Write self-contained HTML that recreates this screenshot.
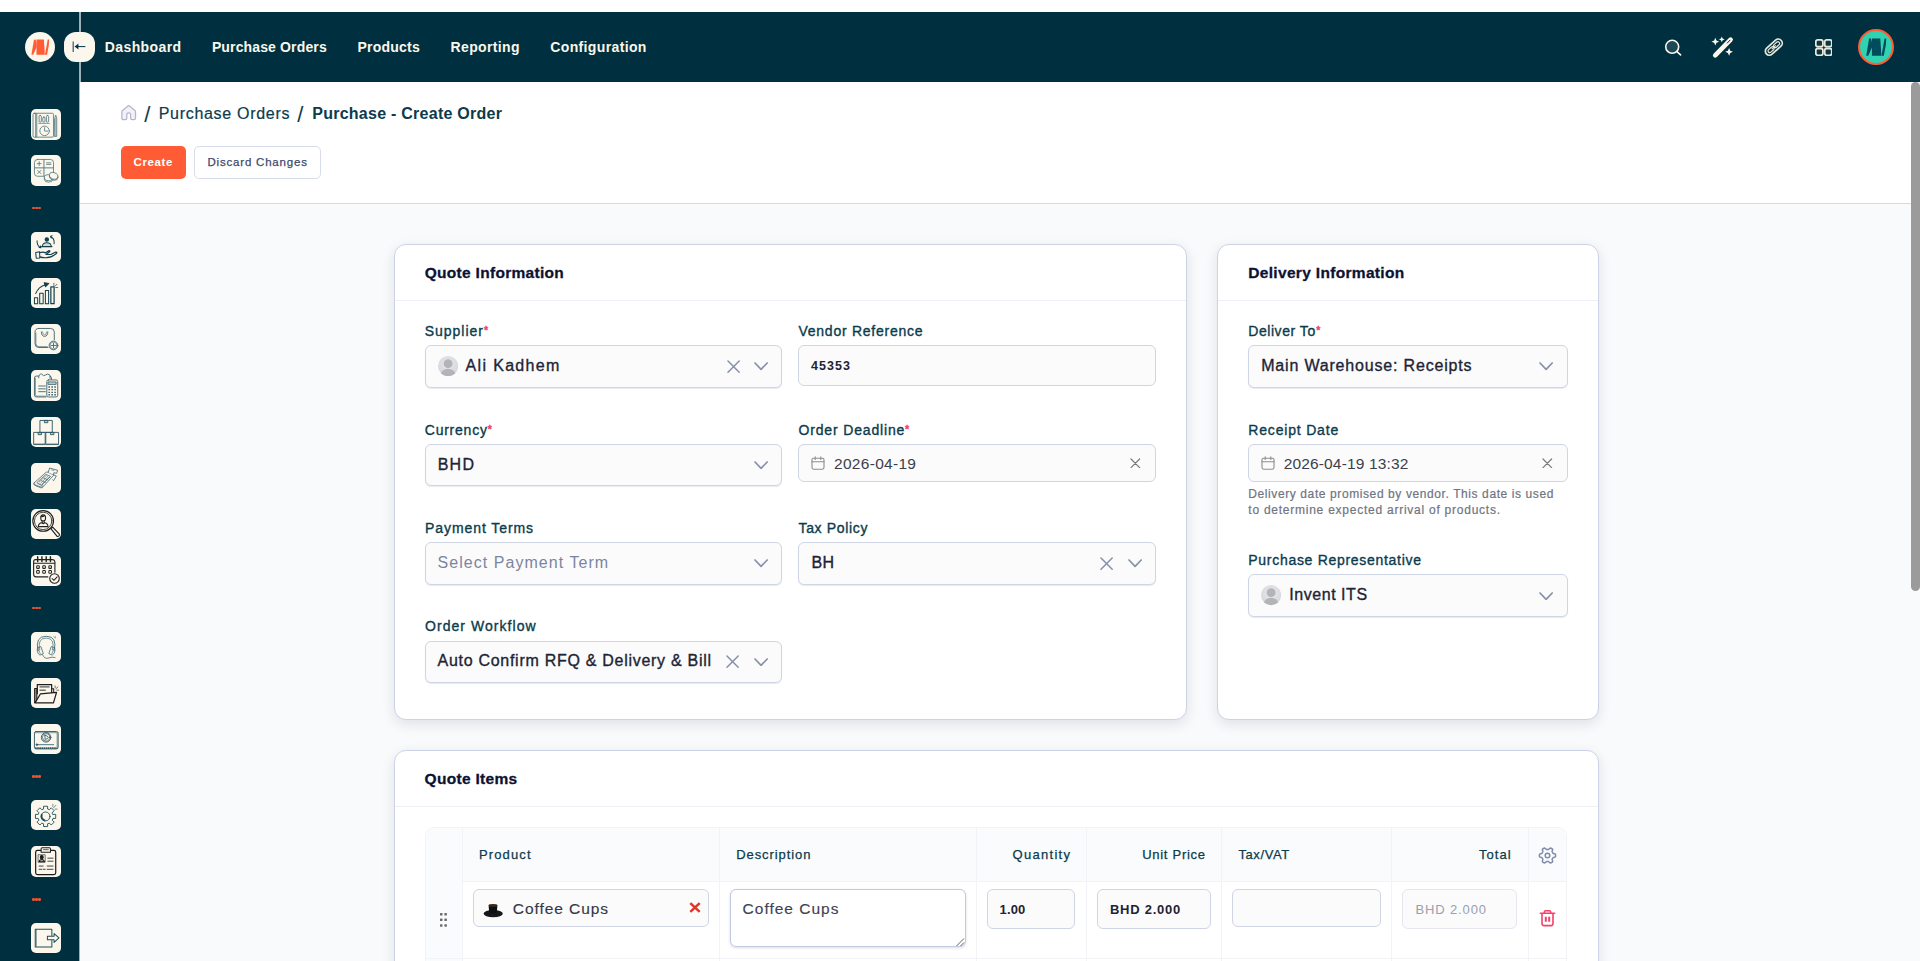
<!DOCTYPE html>
<html lang="en"><head><meta charset="utf-8"><title>Purchase - Create Order</title>
<style>
*{box-sizing:border-box;margin:0;padding:0}
html,body{width:1920px;height:961px;overflow:hidden;background:#fff;font-family:"Liberation Sans",Arial,sans-serif}
.abs,.tx,.box,.ic{position:absolute}
.tx{white-space:nowrap;line-height:1;font-family:"Liberation Sans",Arial,sans-serif;text-decoration:none;display:block}
h2.tx{margin:0}
#top{left:0;top:0;width:1920px;height:12px;background:#fff}
#nav{left:0;top:12px;width:1920px;height:70px;background:#00303f}
#side{left:0;top:12px;width:80px;height:949px;background:#00303f}
#sideline{left:79px;top:12px;width:1.6px;height:949px;background:#9fafb8}
#crumb{left:80px;top:82px;width:1840px;height:122px;background:#fff;border-bottom:1px solid #d3d9e8}
#content{left:80px;top:204px;width:1840px;height:757px;background:#f9fafc}
.card{position:absolute;background:#fff;border:1px solid #cdd3e6;border-radius:12px;box-shadow:0 4px 13px rgba(20,25,40,.115)}
.card .hr{position:absolute;left:0;right:0;height:1px;background:#eef0f5}
.sel,.inp{position:absolute;background:#fbfbfc;border:1px solid #d0d5e6;border-radius:6px}
.sel{box-shadow:0 1px 1px rgba(40,50,100,.10)}
.sb{position:absolute;left:31px;width:30.4px;height:30.4px;background:#fbf7ec;border-radius:5px}
.sb svg{position:absolute;left:0;top:0;width:30.4px;height:30.4px;fill:none;stroke:#123f4d;stroke-width:1;stroke-linecap:round;stroke-linejoin:round}
.dots{position:absolute;left:32.4px;width:9px;height:3px}
.dots i{position:absolute;top:0;width:2.7px;height:2.8px;border-radius:1.35px;background:#f0532f}
.req{position:absolute;color:#f1416c;font-size:10.5px;line-height:1;font-weight:700;-webkit-text-stroke:.35px #f1416c}
</style></head>
<body>
<div id="top" class="abs"></div><header id="nav" class="abs"></header><aside id="side" class="abs"></aside><div id="sideline" class="abs"></div><div id="crumb" class="abs"></div><main id="content" class="abs"></main><div class="sb" style="top:109.2px"><svg viewBox="0 0 30 30" style="stroke:#4f7480;stroke-width:0.8"><rect x="2" y="4.2" width="20.2" height="23.6" rx="1.2"/><path d="M4.6 4.4V27.6M5.7 4.4V27.6"/><rect x="8" y="6.4" width="2.2" height="6.6" rx="1"/><rect x="11.6" y="8" width="2.2" height="5" rx="1"/><rect x="15.2" y="6.4" width="2.2" height="6.6" rx="1"/><path d="M7.6 14.2H18.2" stroke-width=".7"/><circle cx="13.4" cy="21.6" r="4.7"/><path d="M13.4 18.4V21.8H16.4"/><path d="M23.4 9.2 L24.4 6 L25.4 9.2 V27 H23.4Z"/><path d="M24.4 9.2V27" stroke-width=".6"/></svg></div><div class="sb" style="top:155.4px"><svg viewBox="0 0 30 30" style="stroke:#4f7480;stroke-width:0.8"><rect x="3.4" y="4.4" width="18.8" height="16.6" rx="3"/><path d="M12.8 4.6V20.8M3.6 12.7H22" stroke-width=".9"/><path d="M6.2 8.5H10M8.1 6.6V10.4M15.4 7.7H19.6M15.4 9.3H19.6M6.6 15.2L9.8 18.4M9.8 15.2L6.6 18.4"/><ellipse cx="17.4" cy="22.4" rx="4.2" ry="3" fill="#fbf7ec"/><path d="M13.2 22.6V24.2Q13.4 26.8 17.4 26.8Q21.4 26.8 21.6 24.2" /><ellipse cx="22.3" cy="20.6" rx="4.4" ry="3.2" fill="#fbf7ec" transform="rotate(18 22.3 20.6)"/><path d="M18.2 20.2 Q18 24.4 22.8 25 Q26.6 25.2 26.6 22.2" /></svg></div><div class="sb" style="top:231.7px"><svg viewBox="0 0 30 30" style="stroke:#123f4d;stroke-width:1"><circle cx="15.6" cy="7.4" r="1.7" fill="#123f4d"/><path d="M11.2 14.3Q11.4 10.6 15.6 10.6Q19.8 10.6 20 14.3Z" fill="#123f4d" fill-opacity=".15"/><path d="M10.6 14.4H20.6" stroke-width="1.3"/><path d="M6 8.6Q5.6 13.4 9.8 15.6M9.8 15.6L8 15.4M9.8 15.6L9.4 13.8"/><path d="M19.2 4.4Q23.4 6 22.8 11.6M19.2 4.4L20.8 3.6M19.2 4.4L20 6"/><path d="M4.6 20.2L8.4 19.6L8.8 25.6L5.2 25.8Z"/><path d="M8.6 20.4Q12 19.4 14.4 20.6L17.6 18.4Q19 18 18.4 19.6L14.8 22.2H19.6L24.4 19.8Q26.2 19.6 25 21.2Q20.4 25.2 15.6 25.4Q11 25.6 8.8 24.6" stroke-width="1.2"/></svg></div><div class="sb" style="top:277.9px"><svg viewBox="0 0 30 30" style="stroke:#123f4d;stroke-width:1"><rect x="3.4" y="19.6" width="3.2" height="5.8"/><rect x="8.6" y="15" width="3.4" height="10.4"/><rect x="14.2" y="12.4" width="3.2" height="13"/><rect x="19.6" y="8.8" width="3.2" height="16.6" stroke-width="1.2"/><path d="M4.6 15.4Q7.4 8.4 14.4 6.6"/><path d="M13 4.6L17.6 5.4L14.4 8.6Z" fill="#123f4d"/><path d="M23.6 8.2L25.6 6.2M24.4 9.4H26.4M22.6 7.4V5.2" stroke-width=".7"/></svg></div><div class="sb" style="top:324.1px"><svg viewBox="0 0 30 30" style="stroke:#3f6672;stroke-width:0.9"><path d="M7.6 4.4H19.4Q23 4.4 23 8V15.6M16.8 23.2H7.6Q4 23.2 4 19.6V8Q4 4.4 7.6 4.4"/><path d="M4.8 9V19.4Q5 22.4 8 22.4H16" stroke-width=".7"/><path d="M10.2 7.8Q10.3 12.2 13.4 12.2Q16.5 12.2 16.6 7.8"/><path d="M11.4 7.8Q11.6 10.8 13.4 10.8Q15.2 10.8 15.4 7.8" stroke-width=".6"/><circle cx="22.2" cy="21.2" r="4.3" fill="#fbf7ec"/><circle cx="22.2" cy="21.2" r="3.4" stroke-width=".6"/><path d="M22.2 19V23.4M20 21.2H24.4"/></svg></div><div class="sb" style="top:370.4px"><svg viewBox="0 0 30 30" style="stroke:#3f6672;stroke-width:0.9"><path d="M7.4 6H5.2Q3.4 6 3.4 7.8V24.8Q3.4 26.6 5.2 26.6H15M19 6.2Q20.2 6.4 20.2 7.8V9.4"/><path d="M4.4 8V24.6Q4.6 25.8 6 25.8H14.6" stroke-width=".6"/><path d="M7.6 7.8Q7.4 3.6 10.6 4Q12.2 6.6 14.2 5Q16.6 2.8 18.8 5.2V8.4"/><path d="M7.6 15.8H14.2M7.6 18.6H14.2M7.6 21.4H14.2" stroke-width=".9"/><rect x="15.6" y="9.8" width="10.8" height="16.8" rx="1.6" fill="#fbf7ec"/><rect x="17.2" y="11.8" width="7.6" height="2.4" fill="#3f6672" fill-opacity=".25"/><path d="M17.2 16.8H24.8M17.2 19.4H24.8M17.2 22H24.8M17.2 24.4H24.8" stroke-width="1.3" stroke-dasharray="1.6 1.3" stroke-linecap="butt"/></svg></div><div class="sb" style="top:416.7px"><svg viewBox="0 0 30 30" style="stroke:#2f5966;stroke-width:0.9"><rect x="9.2" y="3.4" width="11.8" height="11.8"/><rect x="3" y="15.2" width="11" height="12"/><rect x="15" y="15.2" width="12.2" height="12"/><rect x="13.6" y="3.4" width="3" height="2.2" fill="#2f5966" fill-opacity=".3"/><rect x="7.4" y="15.2" width="3" height="2.2" fill="#2f5966" fill-opacity=".3"/><rect x="19.6" y="15.2" width="3" height="2.2" fill="#2f5966" fill-opacity=".3"/><path d="M3.6 26.6H13.6M15.6 26.6H26.6" stroke-width=".6"/></svg></div><div class="sb" style="top:462.9px"><svg viewBox="0 0 30 30" style="stroke:#3f6672;stroke-width:0.8"><path d="M3 19.8L14.6 9.4Q15.4 8.6 16.6 9L22.6 11.8L11.6 23.8Q10.8 24.8 9.6 24.4L3.6 22Q2.4 21.2 3 19.8Z"/><path d="M3.4 21.2L10 23.8Q11 24 11.8 23.2" stroke-width=".7"/><path d="M6 19.2L14.8 11.2L19.4 13.2L10.6 22Z" stroke-width=".7"/><path d="M8 18.8L15.4 12M9.6 19.8L17 12.8M11 20.6L18.4 13.6M7.6 20.4L11.6 22M10 17.4L14.2 19.2M12.6 15L16.8 16.8" stroke-width=".6"/><path d="M17 9.2L18.4 5L26.4 7.2L25.2 10.2L22.6 9.6L22 11.4" fill="#fbf7ec"/><path d="M20.4 6.8L22.6 7.4" stroke-width=".6"/><path d="M22.6 11.8L25 12.8L22.4 17.4L21.4 16.6" /></svg></div><div class="sb" style="top:509.1px"><svg viewBox="0 0 30 30" style="stroke:#1c1c1c;stroke-width:1"><circle cx="12" cy="11.8" r="10.2" stroke-width="1.1"/><circle cx="12" cy="11.8" r="8.6" stroke-width=".8"/><path d="M19.6 19.4L21.4 18L28 24.8Q28.4 26.8 26 27.2Z" fill="#fbf7ec" stroke-width="1.1"/><ellipse cx="12" cy="8.8" rx="2.4" ry="3"/><path d="M10 7.6Q11.6 8 13.4 6.2"/><path d="M11 11.8V13.4M13 11.8V13.4"/><path d="M7.2 17.4Q7.4 13.8 11 13.6L12 14.6L13 13.6Q16.6 13.8 16.8 17.4Z"/></svg></div><div class="sb" style="top:555.4px"><svg viewBox="0 0 30 30" style="stroke:#222222;stroke-width:1"><path d="M4.4 4.6H21.4Q23.4 4.6 23.6 6.6V17M16.6 21.6H5Q2.6 21.4 2.6 19V6.6Q2.6 4.6 4.4 4.6" stroke-width="1.1"/><path d="M2.8 8.2H23.4" stroke-width="1.1"/><path d="M6.6 1.8V6.4M10.8 1.8V6.4M15 1.8V6.4M19.2 1.8V6.4" stroke-width="1.4"/><rect x="5.6" y="10.6" width="2.6" height="2.6" rx=".7"/><rect x="11.6" y="10.6" width="2.6" height="2.6" rx=".7"/><rect x="17.6" y="10.6" width="2.6" height="2.6" rx=".7"/><rect x="5.6" y="15.4" width="2.6" height="2.6" rx=".7"/><rect x="11.6" y="15.4" width="2.6" height="2.6" rx=".7"/><rect x="17.6" y="15.4" width="2.6" height="2.6" rx=".7"/><circle cx="23.2" cy="23.2" r="4.7" fill="#fbf7ec" stroke-width="1.1"/><path d="M20.8 23.2L22.6 25L25.8 21.6"/></svg></div><div class="sb" style="top:631.5px"><svg viewBox="0 0 30 30" style="stroke:#3f6c78;stroke-width:0.8"><path d="M7 18.6Q3.6 4.2 15 4.2Q26.4 4.2 22.8 18.6" stroke-width=".9"/><path d="M8.6 17.4Q6 6.2 15 6Q24 6.2 21.2 17.4" stroke-width=".7"/><path d="M6.4 15.6L9.8 14.4L12.2 21.4L8.8 22.8Q5.2 20.4 6.4 15.6Z"/><path d="M7.4 16.6L9.2 21.6" stroke-width=".6"/><path d="M23.4 15.6L20 14.4L17.6 21.4L21 22.8Q24.6 20.4 23.4 15.6Z"/><path d="M22.4 16.6L20.6 21.6" stroke-width=".6"/><path d="M11.4 22.4Q13.2 27.2 17.6 25.6Q21 24.2 23.8 25.2" stroke-width=".8"/><path d="M22.4 4.6L23.6 6M24 4.2V5.6" stroke-width=".5"/></svg></div><div class="sb" style="top:677.7px"><svg viewBox="0 0 30 30" style="stroke:#1c1c1c;stroke-width:1"><path d="M3.6 10.4H5.8V22.6L3.6 24.4Z" fill="#1c1c1c" fill-opacity=".45"/><path d="M6.2 15.4V6.6H20.4V14.4" stroke-width="1.2"/><path d="M8.8 8.8H18M8.8 12H14.2" stroke-width=".9"/><path d="M4 24.6L9.4 15.6L25.2 14.2L22.2 24.6Z" stroke-width="1.2" fill="#fbf7ec"/><path d="M20.6 10.6H22.4V14"/><path d="M24.6 10.6L26.6 8.8M25.4 12H27.4M23.8 9.6V7.8" stroke-width=".6"/></svg></div><div class="sb" style="top:723.9px"><svg viewBox="0 0 30 30" style="stroke:#2f5966;stroke-width:0.9"><rect x="3.4" y="7.4" width="23.4" height="17.2" rx="1.6"/><path d="M4.4 8.6H25.6M25.8 9V22.6" stroke-width=".6"/><circle cx="14.9" cy="13.2" r="4.7"/><circle cx="14.9" cy="13.2" r="3.6" stroke-width=".7"/><path d="M13.8 11.2V15.2Q17.2 14.8 17 13.2Q17 11.6 13.8 11.2Z" stroke-width=".8"/><path d="M5.8 20.4H22.4" stroke-width=".8"/><circle cx="5.8" cy="20.4" r=".8" fill="#2f5966"/><path d="M4 23.8H26.2" stroke-width="1.6" stroke-dasharray="1.6 .5" stroke-linecap="butt"/></svg></div><div class="sb" style="top:800.0px"><svg viewBox="0 0 30 30" style="stroke:#1f4f5c;stroke-width:0.9"><path d="M21.7 14.2L24.4 14.2L24.4 18.2L21.7 18.2L21.0 19.9L22.9 21.8L20.0 24.7L18.1 22.8L16.4 23.5L16.4 26.2L12.4 26.2L12.4 23.5L10.7 22.8L8.8 24.7L5.9 21.8L7.8 19.9L7.1 18.2L4.4 18.2L4.4 14.2L7.1 14.2L7.8 12.5L5.9 10.6L8.8 7.7L10.7 9.6L12.4 8.9L12.4 6.2L16.4 6.2L16.4 8.9L18.1 9.6L20.0 7.7L22.9 10.6L21.0 12.5Z" stroke-width=".9"/><circle cx="14.4" cy="16.2" r="4.4"/><path d="M10.6 14.4Q9.6 18.6 13.4 20.2" stroke-width="1.8"/><path d="M22.4 7.6L24.6 5.2M23.6 9H25.8M21.6 6.4V4.2" stroke-width=".6"/></svg></div><div class="sb" style="top:846.3px"><svg viewBox="0 0 30 30" style="stroke:#1c1c1c;stroke-width:1"><path d="M10 4.4H6.4Q4.6 4.4 4.6 6.2V26.4Q4.6 28.2 6.4 28.2H22.6Q24.4 28.2 24.4 26.4V6.2Q24.4 4.4 22.6 4.4H19.4" stroke-width="1.2"/><path d="M10 6.2V2.8Q10 1.8 11 1.8H18.2Q19.2 1.8 19.2 2.8V6.2Z" fill="#fbf7ec"/><path d="M12.4 3.6H17" stroke-width=".7"/><circle cx="10.6" cy="11" r="1.5" fill="#1c1c1c"/><path d="M8 15.6Q8.2 13.4 10.6 13.4Q13 13.4 13.2 15.6Z" fill="#1c1c1c" fill-opacity=".3"/><rect x="7.4" y="8.6" width="6.6" height="7.4" stroke-width=".6"/><path d="M16.6 12H21.8M16.6 15H21.8M8 19.8H12M16 19.8H21.8M8 23H10.6M12 23H14M16 23H21.8" stroke-width=".8"/></svg></div><div class="sb" style="top:922.5px"><svg viewBox="0 0 30 30" style="stroke:#1f4f5c;stroke-width:1"><path d="M20.6 12.4V6.2H4.2V23.6H20.6V17.4"/><path d="M5.2 7V22.8" stroke-width=".6"/><path d="M16.2 13H22.8V10.4L27.6 14.8L22.8 19.2V16.6H16.2Z" fill="#fbf7ec"/></svg></div><div class="dots" style="top:206.6px"><i style="left:0"></i><i style="left:3px"></i><i style="left:6px"></i></div><div class="dots" style="top:606.6px"><i style="left:0"></i><i style="left:3px"></i><i style="left:6px"></i></div><div class="dots" style="top:775.1px"><i style="left:0"></i><i style="left:3px"></i><i style="left:6px"></i></div><div class="dots" style="top:897.9px"><i style="left:0"></i><i style="left:3px"></i><i style="left:6px"></i></div><div class="abs" style="left:25px;top:32px;width:30px;height:30px;border-radius:50%;background:#fbf7ec"></div><div class="abs" style="left:64.2px;top:31.8px;width:30.4px;height:30.3px;border-radius:12px;background:#fbf7ec"></div><div class="abs" style="left:120.5px;top:146.3px;width:65.5px;height:32.8px;background:#ff5c35;border-radius:5px"></div><div class="abs" style="left:194px;top:146.3px;width:126.5px;height:32.8px;background:#fff;border:1px solid #d9dcea;border-radius:5px"></div><section class="card" style="left:394px;top:244px;width:793px;height:476px"><div class="hr" style="top:55.3px"></div></section><section class="card" style="left:1217px;top:244px;width:382px;height:476px"><div class="hr" style="top:55.3px"></div></section><section class="card" style="left:394px;top:750px;width:1205px;height:260px"><div class="hr" style="top:55.3px"></div></section><div class="sel" style="left:425px;top:345.3px;width:357px;height:42.7px;"></div><div class="inp" style="left:798px;top:345.3px;width:358px;height:40.6px;"></div><div class="sel" style="left:425px;top:443.8px;width:357px;height:42.7px;"></div><div class="inp" style="left:798px;top:444.3px;width:358px;height:37.5px;"></div><div class="sel" style="left:425px;top:542.2px;width:357px;height:42.7px;"></div><div class="sel" style="left:798px;top:542.2px;width:358px;height:42.7px;"></div><div class="sel" style="left:425px;top:640.6px;width:357px;height:42.7px;"></div><div class="sel" style="left:1248px;top:345.3px;width:319.5px;height:42.7px;"></div><div class="inp" style="left:1248px;top:444.3px;width:319.5px;height:37.5px;"></div><div class="sel" style="left:1248px;top:574.3px;width:319.5px;height:42.6px;"></div><div class="abs" style="left:425px;top:827px;width:1142px;height:180px;border:1px solid #f2f3f7;border-radius:9px;background:#fff;overflow:hidden"><div class="abs" style="left:0;top:0;width:1142px;height:53.5px;background:#fafbfc;border-bottom:1px solid #f2f3f7"></div><div class="abs" style="left:0;top:0;width:37px;height:180px;background:#fafbfc"></div><div class="abs" style="left:36.2px;top:0;width:1px;height:180px;background:#f2f3f7"></div><div class="abs" style="left:293.0px;top:0;width:1px;height:180px;background:#f2f3f7"></div><div class="abs" style="left:550.2px;top:0;width:1px;height:180px;background:#f2f3f7"></div><div class="abs" style="left:660.2px;top:0;width:1px;height:180px;background:#f2f3f7"></div><div class="abs" style="left:795.3px;top:0;width:1px;height:180px;background:#f2f3f7"></div><div class="abs" style="left:965.4px;top:0;width:1px;height:180px;background:#f2f3f7"></div><div class="abs" style="left:1101.9px;top:0;width:1px;height:180px;background:#f2f3f7"></div><div class="abs" style="left:0;top:129.8px;width:1142px;height:1px;background:#f2f3f7"></div></div><div class="inp" style="left:473px;top:889px;width:236px;height:37.7px;"></div><div class="inp" style="left:730.3px;top:889px;width:235.3px;height:58px;background:#fff;border-color:#c3c9e0;box-shadow:0 1px 3px rgba(40,50,100,.16)"></div><div class="inp" style="left:986.8px;top:889px;width:88.7px;height:39.5px;"></div><div class="inp" style="left:1096.8px;top:889px;width:114.4px;height:39.5px;"></div><div class="inp" style="left:1232.3px;top:889px;width:148.7px;height:37.7px;"></div><div class="inp" style="left:1402.4px;top:889px;width:114.6px;height:39.5px;border-color:#e4e7f0"></div><div class="abs" style="left:1911.2px;top:82px;width:9px;height:509px;border-radius:4.5px;background:#9b9b9b"></div><svg class="ic" style="left:25px;top:32px;width:30.2px;height:30.2px;" viewBox="0 0 30 30"><g fill="#ff5c35"><path d="M6.4 22.7 L8.9 7.6 L10.5 7.5 L11.6 11.5 L11.6 15 L8.1 22.7Z"/><path d="M11.4 7.5 L18.8 7.5 L19.7 22.7 L11.4 22.7Z"/><path d="M19.8 22.7 L22.6 7.5 L24 7.5 L23.7 13 L21.9 22.7Z"/></g></svg><svg class="ic" style="left:64px;top:32px;width:30px;height:30px;" viewBox="0 0 30 30"><path d="M9.2 9.5V20" stroke="#3f4f7a" stroke-width="1.2" fill="none"/><path d="M11.2 14.6H21" stroke="#00303f" stroke-width="1" fill="none" stroke-linecap="round"/><path d="M10.8 14.6 L14.4 11.6 V17.6Z" fill="#00303f"/></svg><svg class="ic" style="left:1662px;top:37px;width:22px;height:22px;" viewBox="0 0 22 22"><circle cx="10.2" cy="9.8" r="6.5" fill="#1c4955" stroke="#fbf7ec" stroke-width="1.6"/><path d="M15.2 14.9 L18.6 17.9" stroke="#fbf7ec" stroke-width="1.6" stroke-linecap="round"/></svg><svg class="ic" style="left:1710px;top:35px;width:26px;height:24px;" viewBox="0 0 26 24"><g fill="#fbf7ec"><path d="M5.2 20.4 L20.6 4.6" stroke="#fbf7ec" stroke-width="4.6" stroke-linecap="round"/><path d="M17.3 8 L20 5.2" stroke="#00303f" stroke-width="1" stroke-linecap="round"/><path d="M5.3 2.8000000000000003 L6.47 5.53 L9.2 6.7 L6.47 7.87 L5.3 10.6 L4.13 7.87 L1.4 6.7 L4.13 5.53Z"/><path d="M11.8 1.5000000000000004 L12.67 3.53 L14.700000000000001 4.4 L12.67 5.27 L11.8 7.300000000000001 L10.93 5.27 L8.9 4.4 L10.93 3.53Z"/><path d="M19.1 12.9 L20.27 15.63 L23.0 16.8 L20.27 17.97 L19.1 20.7 L17.93 17.97 L15.200000000000001 16.8 L17.93 15.63Z"/></g></svg><svg class="ic" style="left:1762px;top:37px;width:24px;height:22px;" viewBox="0 0 24 22"><g transform="rotate(-42 11.8 10.2)" fill="none" stroke="#e9e6da"><rect x="1.8" y="6.2" width="20" height="8" rx="4" stroke-width="1.7"/><rect x="4.6" y="8.5" width="7" height="3.4" rx="1.7" stroke-width="1.2"/><rect x="12" y="8.5" width="7" height="3.4" rx="1.7" stroke-width="1.2"/><path d="M9 10.2H14.6" stroke-width="1.2"/></g></svg><svg class="ic" style="left:1814.8px;top:38.8px;width:17.6px;height:17.2px;" viewBox="0 0 17.6 17"><rect x="0.8" y="0.8" width="7.1" height="6.8" rx="2" fill="#0d3744" stroke="#e9e6da" stroke-width="1.8"/><rect x="0.8" y="9.4" width="7.1" height="6.8" rx="2" fill="#0d3744" stroke="#e9e6da" stroke-width="1.8"/><rect x="9.7" y="0.8" width="7.1" height="6.8" rx="2" fill="#0d3744" stroke="#e9e6da" stroke-width="1.8"/><rect x="9.7" y="9.4" width="7.1" height="6.8" rx="2" fill="#0d3744" stroke="#e9e6da" stroke-width="1.8"/></svg><div class="abs" style="left:1858px;top:29px;width:36px;height:36px;border-radius:50%;background:#2fd3b1;border:2px solid #ff5c35"></div><svg class="ic" style="left:1859px;top:30px;width:34px;height:34px;" viewBox="0 0 30 30"><g fill="#004c5c"><path d="M6.4 22.7 L8.9 7.6 L10.5 7.5 L11.6 11.5 L11.6 15 L8.1 22.7Z"/><path d="M11.4 7.5 L18.8 7.5 L19.7 22.7 L11.4 22.7Z"/><path d="M19.8 22.7 L22.6 7.5 L24 7.5 L23.7 13 L21.9 22.7Z"/></g></svg><svg class="ic" style="left:120px;top:104px;width:18px;height:18px;" viewBox="0 0 18 18"><path d="M1.9 7.6 Q1.9 6.9 2.5 6.4 L8 1.9 Q8.7 1.4 9.4 1.9 L14.9 6.4 Q15.5 6.9 15.5 7.6 V13.9 Q15.5 15.6 13.8 15.6 H12.2 Q10.6 15.6 10.6 14 V10.6 Q10.6 8.9 8.7 8.9 Q6.8 8.9 6.8 10.6 V14 Q6.8 15.6 5.2 15.6 H3.6 Q1.9 15.6 1.9 13.9Z" fill="#f1f2f7" stroke="#b4b6d1" stroke-width="1.3" stroke-linejoin="round"/></svg><span class="req" style="left:483.9px;top:325.3px">*</span><span class="req" style="left:487.7px;top:423.5px">*</span><span class="req" style="left:905.1px;top:423.5px">*</span><span class="req" style="left:1316.3px;top:325.3px">*</span><svg class="ic" style="left:438px;top:356.3px;width:20.2px;height:20.2px;" viewBox="0 0 20 20"><defs><radialGradient id="ag1" cx="50%" cy="40%" r="60%"><stop offset="0" stop-color="#e9eaec"/><stop offset="1" stop-color="#d5d6d9"/></radialGradient><clipPath id="ac1"><circle cx="10" cy="10" r="10"/></clipPath></defs><circle cx="10" cy="10" r="10" fill="url(#ag1)"/><g clip-path="url(#ac1)" fill="#b3b4b8"><circle cx="10" cy="7.6" r="4.4"/><ellipse cx="10" cy="17.7" rx="7" ry="5.1"/></g></svg><svg class="ic" style="left:726.5px;top:359.9px;width:13.2px;height:13.2px;" viewBox="0 0 13.2 13.2"><path d="M1 1 L12.2 12.2 M12.2 1 L1 12.2" fill="none" stroke="#8790aa" stroke-width="1.5" stroke-linecap="round"/></svg><svg class="ic" style="left:753.9px;top:362.45000000000005px;width:14.2px;height:8.3px;" viewBox="0 0 14.2 8.3"><path d="M1 1 L7.1 7.3 L13.2 1" fill="none" stroke="#8790aa" stroke-width="1.7" stroke-linecap="round" stroke-linejoin="round"/></svg><svg class="ic" style="left:753.9px;top:460.95000000000005px;width:14.2px;height:8.3px;" viewBox="0 0 14.2 8.3"><path d="M1 1 L7.1 7.3 L13.2 1" fill="none" stroke="#8790aa" stroke-width="1.7" stroke-linecap="round" stroke-linejoin="round"/></svg><svg class="ic" style="left:753.9px;top:559.35px;width:14.2px;height:8.3px;" viewBox="0 0 14.2 8.3"><path d="M1 1 L7.1 7.3 L13.2 1" fill="none" stroke="#8790aa" stroke-width="1.7" stroke-linecap="round" stroke-linejoin="round"/></svg><svg class="ic" style="left:1100.2px;top:556.6999999999999px;width:13.2px;height:13.2px;" viewBox="0 0 13.2 13.2"><path d="M1 1 L12.2 12.2 M12.2 1 L1 12.2" fill="none" stroke="#8790aa" stroke-width="1.5" stroke-linecap="round"/></svg><svg class="ic" style="left:1127.9px;top:559.35px;width:14.2px;height:8.3px;" viewBox="0 0 14.2 8.3"><path d="M1 1 L7.1 7.3 L13.2 1" fill="none" stroke="#8790aa" stroke-width="1.7" stroke-linecap="round" stroke-linejoin="round"/></svg><svg class="ic" style="left:726.3px;top:655.1999999999999px;width:13.2px;height:13.2px;" viewBox="0 0 13.2 13.2"><path d="M1 1 L12.2 12.2 M12.2 1 L1 12.2" fill="none" stroke="#8790aa" stroke-width="1.5" stroke-linecap="round"/></svg><svg class="ic" style="left:753.9px;top:657.75px;width:14.2px;height:8.3px;" viewBox="0 0 14.2 8.3"><path d="M1 1 L7.1 7.3 L13.2 1" fill="none" stroke="#8790aa" stroke-width="1.7" stroke-linecap="round" stroke-linejoin="round"/></svg><svg class="ic" style="left:1539.3000000000002px;top:362.45000000000005px;width:14.2px;height:8.3px;" viewBox="0 0 14.2 8.3"><path d="M1 1 L7.1 7.3 L13.2 1" fill="none" stroke="#8790aa" stroke-width="1.7" stroke-linecap="round" stroke-linejoin="round"/></svg><svg class="ic" style="left:1261.2px;top:585.4px;width:20.2px;height:20.2px;" viewBox="0 0 20 20"><defs><radialGradient id="ag2" cx="50%" cy="40%" r="60%"><stop offset="0" stop-color="#e9eaec"/><stop offset="1" stop-color="#d5d6d9"/></radialGradient><clipPath id="ac2"><circle cx="10" cy="10" r="10"/></clipPath></defs><circle cx="10" cy="10" r="10" fill="url(#ag2)"/><g clip-path="url(#ac2)" fill="#b3b4b8"><circle cx="10" cy="7.6" r="4.4"/><ellipse cx="10" cy="17.7" rx="7" ry="5.1"/></g></svg><svg class="ic" style="left:1539.3000000000002px;top:591.95px;width:14.2px;height:8.3px;" viewBox="0 0 14.2 8.3"><path d="M1 1 L7.1 7.3 L13.2 1" fill="none" stroke="#8790aa" stroke-width="1.7" stroke-linecap="round" stroke-linejoin="round"/></svg><svg class="ic" style="left:811.2px;top:456.2px;width:14px;height:14px;" viewBox="0 0 14 14"><g fill="none" stroke="#8d8d8d" stroke-width="1.1" stroke-linecap="round" stroke-linejoin="round"><rect x="1" y="2.2" width="12" height="11" rx="1.6"/><path d="M1 5.8H13M4.2 .8V3.4M9.8 .8V3.4"/></g></svg><svg class="ic" style="left:1130.3px;top:457.59999999999997px;width:10.6px;height:10.6px;" viewBox="0 0 10.6 10.6"><path d="M1 1 L9.6 9.6 M9.6 1 L1 9.6" fill="none" stroke="#7a7a7a" stroke-width="1.2" stroke-linecap="round"/></svg><svg class="ic" style="left:1261.2px;top:456.2px;width:14px;height:14px;" viewBox="0 0 14 14"><g fill="none" stroke="#8d8d8d" stroke-width="1.1" stroke-linecap="round" stroke-linejoin="round"><rect x="1" y="2.2" width="12" height="11" rx="1.6"/><path d="M1 5.8H13M4.2 .8V3.4M9.8 .8V3.4"/></g></svg><svg class="ic" style="left:1542.0px;top:457.59999999999997px;width:10.6px;height:10.6px;" viewBox="0 0 10.6 10.6"><path d="M1 1 L9.6 9.6 M9.6 1 L1 9.6" fill="none" stroke="#7a7a7a" stroke-width="1.2" stroke-linecap="round"/></svg><svg class="ic" style="left:483px;top:902.5px;width:20.5px;height:15px;" viewBox="0 0 20.5 15"><ellipse cx="10.2" cy="10.6" rx="9.6" ry="3.6" fill="#17171b"/><path d="M5.6 2.2 H14.4 L13.8 9.6 Q10.2 11.4 6.2 9.6Z" fill="#0f0f12"/><ellipse cx="10" cy="2.4" rx="4.4" ry="1.3" fill="#3a2a22"/></svg><svg class="ic" style="left:688.9px;top:902.4px;width:12px;height:11px;" viewBox="0 0 12 11"><path d="M1.3 1.2 L10.7 9.8 M10.7 1.2 L1.3 9.8" stroke="#e0352b" stroke-width="2.5" fill="none"/></svg><svg class="ic" style="left:440px;top:913px;width:7px;height:14px;" viewBox="0 0 7 14"><rect x="0" y="0" width="2.5" height="2.5" rx=".6" fill="#6a6a6a"/><rect x="0" y="5.6" width="2.5" height="2.5" rx=".6" fill="#6a6a6a"/><rect x="0" y="11.2" width="2.5" height="2.5" rx=".6" fill="#6a6a6a"/><rect x="4.4" y="0" width="2.5" height="2.5" rx=".6" fill="#6a6a6a"/><rect x="4.4" y="5.6" width="2.5" height="2.5" rx=".6" fill="#6a6a6a"/><rect x="4.4" y="11.2" width="2.5" height="2.5" rx=".6" fill="#6a6a6a"/></svg><svg class="ic" style="left:1537.6px;top:845.5px;width:19px;height:19px;" viewBox="0 0 19 19"><g fill="none" stroke="#828bab" stroke-width="1.5" stroke-linejoin="round"><path d="M17.60 9.50 L17.57 10.21 L17.38 10.89 L16.26 11.31 L15.14 11.55 L14.85 11.99 L14.61 12.45 L14.33 12.88 L14.10 13.36 L14.45 14.45 L14.64 15.63 L14.15 16.14 L13.55 16.51 L12.92 16.84 L12.24 17.02 L11.31 16.26 L10.54 15.41 L10.01 15.38 L9.50 15.40 L8.99 15.38 L8.46 15.41 L7.69 16.26 L6.76 17.02 L6.08 16.84 L5.45 16.51 L4.85 16.14 L4.36 15.63 L4.55 14.45 L4.90 13.36 L4.67 12.88 L4.39 12.45 L4.15 11.99 L3.86 11.55 L2.74 11.31 L1.62 10.89 L1.43 10.21 L1.40 9.50 L1.43 8.79 L1.62 8.11 L2.74 7.69 L3.86 7.45 L4.15 7.01 L4.39 6.55 L4.67 6.12 L4.90 5.64 L4.55 4.55 L4.36 3.37 L4.85 2.86 L5.45 2.49 L6.08 2.16 L6.76 1.98 L7.69 2.74 L8.46 3.59 L8.99 3.62 L9.50 3.60 L10.01 3.62 L10.54 3.59 L11.31 2.74 L12.24 1.98 L12.92 2.16 L13.55 2.49 L14.15 2.86 L14.64 3.37 L14.45 4.55 L14.10 5.64 L14.33 6.12 L14.61 6.55 L14.85 7.01 L15.14 7.45 L16.26 7.69 L17.38 8.11 L17.57 8.79Z"/><circle cx="9.5" cy="9.5" r="2.3"/></g></svg><svg class="ic" style="left:1539px;top:908.6px;width:17px;height:18px;" viewBox="0 0 17 18"><g fill="none" stroke="#f1416c" stroke-width="1.6" stroke-linecap="round" stroke-linejoin="round"><path d="M1.4 4.2H15.6M5.4 4V2.8Q5.4 1.7 6.5 1.7H10.5Q11.6 1.7 11.6 2.8V4M3 4.4V14.6Q3 16.6 5 16.6H12Q14 16.6 14 14.6V4.4"/><path d="M6.8 7.8V12.8M10.2 7.8V12.8" stroke-width="2" stroke-linecap="butt"/></g></svg><svg class="ic" style="left:954.4px;top:936px;width:11px;height:11px;" viewBox="0 0 11 11"><path d="M2.5 10 L10 2.5 M6.5 10 L10 6.5" stroke="#5f5f5f" stroke-width="1" fill="none"/></svg><a class="tx nv" style="left:104.80px;top:39.85px;font-size:14px;font-weight:700;color:#fbf7ec;letter-spacing:0.397px;">Dashboard</a>
<a class="tx nv" style="left:211.90px;top:39.85px;font-size:14px;font-weight:700;color:#fbf7ec;letter-spacing:0.140px;">Purchase Orders</a>
<a class="tx nv" style="left:357.50px;top:39.85px;font-size:14px;font-weight:700;color:#fbf7ec;letter-spacing:0.230px;">Products</a>
<a class="tx nv" style="left:450.60px;top:39.85px;font-size:14px;font-weight:700;color:#fbf7ec;letter-spacing:0.349px;">Reporting</a>
<a class="tx nv" style="left:550.30px;top:39.85px;font-size:14px;font-weight:700;color:#fbf7ec;letter-spacing:0.361px;">Configuration</a>
<span class="tx" style="left:144.20px;top:103.58px;font-size:22px;font-weight:400;color:#0b3b4c;letter-spacing:0.000px;">/</span>
<span class="tx" style="left:158.75px;top:105.96px;font-size:16px;font-weight:400;color:#0b3b4c;letter-spacing:0.694px;-webkit-text-stroke:.2px #0b3b4c;">Purchase Orders</span>
<span class="tx" style="left:297.20px;top:103.58px;font-size:22px;font-weight:400;color:#0b3b4c;letter-spacing:0.000px;">/</span>
<span class="tx" style="left:312.25px;top:105.96px;font-size:16px;font-weight:700;color:#0b3b4c;letter-spacing:0.253px;">Purchase - Create Order</span>
<span class="tx" style="left:133.50px;top:156.87px;font-size:11.5px;font-weight:700;color:#ffffff;letter-spacing:0.637px;">Create</span>
<span class="tx" style="left:207.50px;top:156.87px;font-size:11.5px;font-weight:400;color:#3f4a6b;letter-spacing:0.799px;-webkit-text-stroke:.25px #3f4a6b;">Discard Changes</span>
<h2 class="tx" style="left:424.75px;top:264.98px;font-size:15.5px;font-weight:700;color:#0d1233;letter-spacing:0.292px;-webkit-text-stroke:.3px #0d1233;">Quote Information</h2>
<h2 class="tx" style="left:1248.30px;top:265.08px;font-size:15.5px;font-weight:700;color:#0d1233;letter-spacing:0.317px;-webkit-text-stroke:.3px #0d1233;">Delivery Information</h2>
<h2 class="tx" style="left:424.60px;top:770.98px;font-size:15.5px;font-weight:700;color:#0d1233;letter-spacing:0.302px;-webkit-text-stroke:.3px #0d1233;">Quote Items</h2>
<label class="tx" style="left:424.75px;top:324.40px;font-size:14px;font-weight:400;color:#0b3b4c;letter-spacing:0.982px;-webkit-text-stroke:.35px #0b3b4c;">Supplier</label>
<label class="tx" style="left:798.50px;top:324.40px;font-size:14px;font-weight:400;color:#0b3b4c;letter-spacing:0.743px;-webkit-text-stroke:.35px #0b3b4c;">Vendor Reference</label>
<label class="tx" style="left:424.75px;top:422.55px;font-size:14px;font-weight:400;color:#0b3b4c;letter-spacing:0.765px;-webkit-text-stroke:.35px #0b3b4c;">Currency</label>
<label class="tx" style="left:798.50px;top:422.55px;font-size:14px;font-weight:400;color:#0b3b4c;letter-spacing:0.843px;-webkit-text-stroke:.35px #0b3b4c;">Order Deadline</label>
<label class="tx" style="left:425.00px;top:521.05px;font-size:14px;font-weight:400;color:#0b3b4c;letter-spacing:0.925px;-webkit-text-stroke:.35px #0b3b4c;">Payment Terms</label>
<label class="tx" style="left:798.50px;top:520.85px;font-size:14px;font-weight:400;color:#0b3b4c;letter-spacing:0.663px;-webkit-text-stroke:.35px #0b3b4c;">Tax Policy</label>
<label class="tx" style="left:425.00px;top:619.40px;font-size:14px;font-weight:400;color:#0b3b4c;letter-spacing:1.047px;-webkit-text-stroke:.35px #0b3b4c;">Order Workflow</label>
<label class="tx" style="left:1248.30px;top:324.40px;font-size:14px;font-weight:400;color:#0b3b4c;letter-spacing:0.544px;-webkit-text-stroke:.35px #0b3b4c;">Deliver To</label>
<label class="tx" style="left:1248.30px;top:423.15px;font-size:14px;font-weight:400;color:#0b3b4c;letter-spacing:0.815px;-webkit-text-stroke:.35px #0b3b4c;">Receipt Date</label>
<label class="tx" style="left:1248.30px;top:552.95px;font-size:14px;font-weight:400;color:#0b3b4c;letter-spacing:0.704px;-webkit-text-stroke:.35px #0b3b4c;">Purchase Representative</label>
<span class="tx" style="left:465.60px;top:357.71px;font-size:16px;font-weight:400;color:#1e2433;letter-spacing:1.330px;-webkit-text-stroke:.35px #1e2433;">Ali Kadhem</span>
<span class="tx" style="left:437.70px;top:456.66px;font-size:16px;font-weight:400;color:#1e2433;letter-spacing:1.259px;-webkit-text-stroke:.35px #1e2433;">BHD</span>
<span class="tx" style="left:811.40px;top:554.66px;font-size:16px;font-weight:400;color:#1e2433;letter-spacing:0.366px;-webkit-text-stroke:.35px #1e2433;">BH</span>
<span class="tx" style="left:437.50px;top:653.26px;font-size:16px;font-weight:400;color:#1e2433;letter-spacing:0.717px;-webkit-text-stroke:.35px #1e2433;">Auto Confirm RFQ &amp; Delivery &amp; Bill</span>
<span class="tx" style="left:1261.20px;top:357.76px;font-size:16px;font-weight:400;color:#1e2433;letter-spacing:0.822px;-webkit-text-stroke:.35px #1e2433;">Main Warehouse: Receipts</span>
<span class="tx" style="left:1289.30px;top:586.96px;font-size:16px;font-weight:400;color:#1e2433;letter-spacing:0.542px;-webkit-text-stroke:.35px #1e2433;">Invent ITS</span>
<span class="tx" style="left:437.50px;top:554.56px;font-size:16px;font-weight:400;color:#7b859f;letter-spacing:1.046px;">Select Payment Term</span>
<span class="tx" style="left:811.00px;top:359.67px;font-size:12.5px;font-weight:700;color:#1e2433;letter-spacing:1.059px;">45353</span>
<span class="tx" style="left:834.00px;top:455.63px;font-size:15.5px;font-weight:400;color:#3b3f4a;letter-spacing:0.300px;">2026-04-19</span>
<span class="tx" style="left:1283.70px;top:455.68px;font-size:15.5px;font-weight:400;color:#3b3f4a;letter-spacing:0.154px;">2026-04-19 13:32</span>
<span class="tx" style="left:1248.30px;top:487.54px;font-size:12px;font-weight:400;color:#70747f;letter-spacing:0.597px;-webkit-text-stroke:.2px #70747f;">Delivery date promised by vendor. This date is used</span>
<span class="tx" style="left:1248.30px;top:503.54px;font-size:12px;font-weight:400;color:#70747f;letter-spacing:0.754px;-webkit-text-stroke:.2px #70747f;">to determine expected arrival of products.</span>
<span class="tx th" style="left:479.00px;top:848.40px;font-size:13px;font-weight:400;color:#0b3b4c;letter-spacing:1.131px;-webkit-text-stroke:.25px #0b3b4c;">Product</span>
<span class="tx th" style="left:736.20px;top:848.40px;font-size:13px;font-weight:400;color:#0b3b4c;letter-spacing:0.917px;-webkit-text-stroke:.25px #0b3b4c;">Description</span>
<span class="tx th" style="left:1012.60px;top:848.40px;font-size:13px;font-weight:400;color:#0b3b4c;letter-spacing:1.283px;-webkit-text-stroke:.25px #0b3b4c;">Quantity</span>
<span class="tx th" style="left:1142.20px;top:848.40px;font-size:13px;font-weight:400;color:#0b3b4c;letter-spacing:0.727px;-webkit-text-stroke:.25px #0b3b4c;">Unit Price</span>
<span class="tx th" style="left:1238.40px;top:848.40px;font-size:13px;font-weight:400;color:#0b3b4c;letter-spacing:0.616px;-webkit-text-stroke:.25px #0b3b4c;">Tax/VAT</span>
<span class="tx th" style="left:1479.00px;top:848.40px;font-size:13px;font-weight:400;color:#0b3b4c;letter-spacing:1.058px;-webkit-text-stroke:.25px #0b3b4c;">Total</span>
<span class="tx" style="left:512.75px;top:901.38px;font-size:15.5px;font-weight:400;color:#343846;letter-spacing:0.946px;-webkit-text-stroke:.15px #343846;">Coffee Cups</span>
<span class="tx" style="left:742.60px;top:901.28px;font-size:15.5px;font-weight:400;color:#3f4352;letter-spacing:1.001px;-webkit-text-stroke:.15px #3f4352;">Coffee Cups</span>
<span class="tx" style="left:999.50px;top:902.60px;font-size:13px;font-weight:700;color:#1e2433;letter-spacing:0.162px;">1.00</span>
<span class="tx" style="left:1109.90px;top:902.60px;font-size:13px;font-weight:700;color:#1e2433;letter-spacing:0.761px;">BHD 2.000</span>
<span class="tx" style="left:1415.50px;top:902.60px;font-size:13px;font-weight:400;color:#9aa0ae;letter-spacing:0.863px;">BHD 2.000</span>
</body></html>
